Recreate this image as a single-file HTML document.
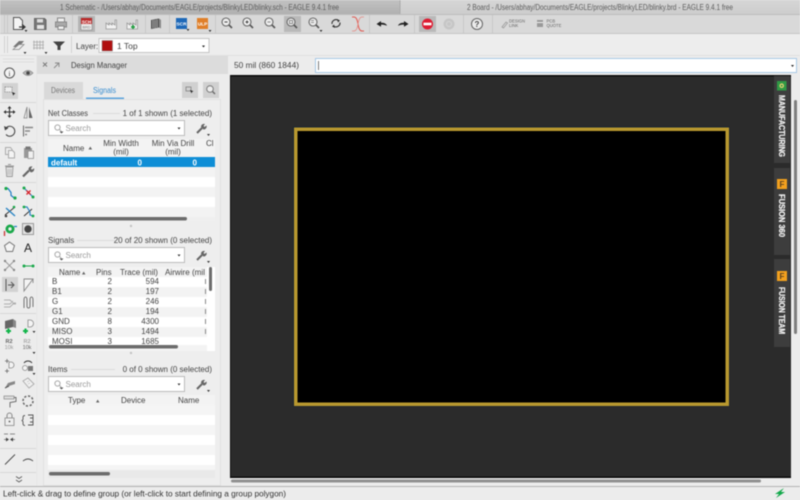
<!DOCTYPE html>
<html><head><meta charset="utf-8"><title>EAGLE</title>
<style>
html,body{margin:0;padding:0;background:#ececec;width:800px;height:500px;overflow:hidden}
svg{position:absolute;left:0;top:0;filter:blur(.4px)}
text{font-family:"Liberation Sans",sans-serif;font-size:8px;fill:#444}
.g{fill:#5c5c5c}
.w{fill:#fff}
.s{fill:#999}
.b{font-weight:bold;fill:#f2f2f2;font-size:8px;stroke:#f2f2f2;stroke-width:.25}
</style></head><body>
<svg width="800" height="500" viewBox="0 0 800 500">
<defs>
<linearGradient id="tl" x1="0" y1="0" x2="0" y2="1"><stop offset="0" stop-color="#c2c2c2"/><stop offset="1" stop-color="#b0b0b0"/></linearGradient>
<linearGradient id="tr" x1="0" y1="0" x2="0" y2="1"><stop offset="0" stop-color="#d6d6d6"/><stop offset="1" stop-color="#cdcdcd"/></linearGradient>
<g id="mag"><circle cx="-1" cy="-1" r="4" fill="#eee" stroke="#666" stroke-width="1.1"/><path d="M2 2L5 5" stroke="#555" stroke-width="1.6"/></g>
<g id="search"><rect x="0" y="0" width="136" height="15" fill="#fff" stroke="#bbb"/><circle cx="9" cy="7" r="2.6" fill="none" stroke="#aaa"/><path d="M11 9l2 2" stroke="#aaa"/><path d="M11 11h4l-2 2z" fill="#555"/><text x="17" y="10.500" class="s">Search</text><path d="M129 7h3l-1.500 2z" fill="#333"/></g>
<g id="wr"><path d="M-4 5L1 0" stroke="#666" stroke-width="2"/><path d="M0 -1a3 3 0 0 1 4 -3l-1.500 2 1 1 2-1.500a3 3 0 0 1-3 4z" fill="#666"/><path d="M6 6h3l-1.500 2z" fill="#333"/></g>
<g id="tri"><path d="M-1.500 1h3L0 3z" fill="#333"/></g>
</defs>

<!-- title bars -->
<rect width="800" height="14" fill="url(#tl)"/>
<rect x="400" width="400" height="14" fill="url(#tr)"/>
<rect x="399.500" y="0" width="1" height="14" fill="#a9a9a9"/>
<text x="60" y="10" textLength="279" lengthAdjust="spacingAndGlyphs" class="g">1 Schematic - /Users/abhay/Documents/EAGLE/projects/BlinkyLED/blinky.sch - EAGLE 9.4.1 free</text>
<text x="467" y="10" textLength="266" lengthAdjust="spacingAndGlyphs" class="g">2 Board - /Users/abhay/Documents/EAGLE/projects/BlinkyLED/blinky.brd - EAGLE 9.4.1 free</text>

<!-- main toolbar -->
<rect y="14" width="800" height="20" fill="#d9d9d9"/>
<rect y="14" width="800" height="1" fill="#bcbcbc"/>
<rect y="33" width="800" height="1" fill="#c6c6c6"/>
<g fill="#c8c8c8">
<rect x="4" y="15" width="1" height="18"/><rect x="7" y="15" width="1" height="18"/>
<rect x="72" y="15" width="1" height="18"/><rect x="145" y="15" width="1" height="18"/>
<rect x="169" y="15" width="1" height="18"/><rect x="215" y="15" width="1" height="18"/>
<rect x="369" y="15" width="1" height="18"/><rect x="414" y="15" width="1" height="18"/>
<rect x="463" y="15" width="1" height="18"/><rect x="492" y="15" width="1" height="18"/>
</g>
<!-- new file -->
<path d="M13.500 17.500h6l3 3v9h-9z" fill="#f4f4f4" stroke="#555"/><path d="M19 27h6M22 24.500l3 2.500-3 2.500" stroke="#333" fill="none" stroke-width="1.200"/><use href="#tri" x="26" y="29"/>
<!-- save -->
<path d="M34.500 18.500h10l1.500 1.500v9.500h-11.500z" fill="#777" stroke="#666"/><rect x="37" y="19" width="6" height="3.500" fill="#ddd"/><rect x="37" y="25" width="7" height="4" fill="#e4e4e4"/>
<!-- print -->
<rect x="57.500" y="18" width="7" height="4" fill="#eee" stroke="#888"/><rect x="55.500" y="22" width="11" height="5" fill="#aaa" stroke="#888"/><rect x="58" y="26" width="6" height="3.500" fill="#f0f0f0" stroke="#888"/>
<!-- SCH button -->
<rect x="78" y="16" width="17" height="16" fill="#b4b4b4"/>
<rect x="81" y="18" width="11" height="12" fill="#eee" stroke="#888" stroke-width=".6"/><rect x="81" y="18" width="11" height="6" fill="#bb2a2a"/>
<text x="86.500" y="23.300" text-anchor="middle" style="font-size:4.500px;font-weight:bold;fill:#fff">SCH</text>
<text x="86.500" y="28.500" text-anchor="middle" style="font-size:3.800px;fill:#777">BRD</text>
<!-- factories -->
<path d="M106 29v-6l3 2v-2l3 2v-2l3 2v-5h1.500v9z" fill="#f2f2f2" stroke="#999" stroke-width=".8"/>
<path d="M127 29v-6l3 2v-2l3 2v-2l3 2v-5h1.500v9z" fill="#f2f2f2" stroke="#999" stroke-width=".8"/><path d="M131 27h4M133 25v4" stroke="#1a9a3a" stroke-width="1.600"/>
<!-- library -->
<path d="M151 20l8-1.500v9l-8 1.500z" fill="#555"/><path d="M159 18.500l2 1.500v8.500l-2 -1z" fill="#888"/><path d="M153 20v8M155 20v8M157 19.500v8" stroke="#ddd" stroke-width=".6"/>
<!-- SCR ULP -->
<rect x="176" y="18" width="11" height="11" fill="#1d68b8"/><text x="181.500" y="25.500" text-anchor="middle" style="font-size:4.800px;font-weight:bold;fill:#fff">SCR</text><use href="#tri" x="188" y="28"/>
<rect x="197" y="18" width="11" height="11" fill="#e07f28"/><text x="202.500" y="25.500" text-anchor="middle" style="font-size:4.800px;font-weight:bold;fill:#fff">ULP</text><use href="#tri" x="210" y="29"/>
<!-- zoom group -->
<use href="#mag" x="227" y="23"/><path d="M224.500 22h3" stroke="#444"/>
<use href="#mag" x="248" y="23"/><path d="M245.500 22h3M247 20.500v3" stroke="#444"/>
<use href="#mag" x="270" y="23"/><path d="M267.500 22h3" stroke="#888"/>
<rect x="284" y="16" width="17" height="16" fill="#b9b9b9"/>
<use href="#mag" x="292" y="23"/><rect x="289.500" y="20.500" width="3" height="3" fill="none" stroke="#666" stroke-width=".7"/>
<use href="#mag" x="314" y="23"/><path d="M311 20.500h3M311 22.500h3" stroke="#777" stroke-width=".7"/><use href="#tri" x="321" y="29"/>
<!-- refresh -->
<path d="M332 24a4 4 0 0 1 6.500 -3.500M340 22.500a4 4 0 0 1-6.500 3.500" fill="none" stroke="#333" stroke-width="1.100"/><path d="M337 19l3 1.500-2 2zM335 28l-3-1.500 2-2z" fill="#333"/>
<!-- ratsnest X -->
<path d="M352 17h2q3 0 4 7t4 7h2" fill="none" stroke="#e05a52" stroke-width="1"/><path d="M352 31h2q3 0 4-7t4-7h2" fill="none" stroke="#e58a84" stroke-width=".8"/>
<!-- arrows -->
<path d="M376.500 24l4.500-3v1.800c3 0 5 .5 6 3-2-1-3.500-1.200-6-1.200v2.200z" fill="#222"/>
<path d="M408.500 24l-4.500-3v1.800c-3 0-5 .5-6 3 2-1 3.500-1.200 6-1.200v2.200z" fill="#222"/>
<!-- stop -->
<rect x="419" y="16" width="17" height="16" fill="#b9b9b9"/>
<circle cx="427.500" cy="24" r="5.500" fill="#dd1d33"/><rect x="423.500" y="22.700" width="8" height="2.600" fill="#fff"/>
<circle cx="449" cy="24" r="5.500" fill="#c6c6c6"/><circle cx="449" cy="24" r="2.500" fill="none" stroke="#d4d4d4"/>
<!-- help -->
<circle cx="477" cy="24" r="5.500" fill="#ececec" stroke="#666" stroke-width="1"/><text x="477" y="27" text-anchor="middle" style="font-size:8px;font-weight:bold;fill:#444">?</text>
<!-- design link -->
<path d="M502 27l4-5 1.500 1-4 5z" fill="none" stroke="#999" stroke-width=".8"/>
<text x="509" y="22.500" style="font-size:4.200px;fill:#666">DESIGN</text><text x="509" y="27" style="font-size:4.200px;fill:#666">LINK</text>
<rect x="537" y="20" width="6" height="7" fill="#999"/><rect x="537" y="22" width="6" height="1" fill="#eee"/>
<text x="546.500" y="22.500" style="font-size:4.200px;fill:#666">PCB</text><text x="546.500" y="27" style="font-size:4.200px;fill:#666">QUOTE</text>

<!-- second toolbar -->
<rect y="34" width="800" height="21" fill="#ededed"/>
<rect y="55" width="800" height="1" fill="#e0e0e0"/>
<rect x="4" y="36" width="1" height="17" fill="#d2d2d2"/><rect x="7" y="36" width="1" height="17" fill="#d2d2d2"/>
<rect x="71" y="36" width="1" height="17" fill="#d2d2d2"/>
<path d="M13 47l6-6h5l-5 6z" fill="#777"/><path d="M13 49.500l6-5h5l-5 5z" fill="#ededed" stroke="#888" stroke-width=".8"/><use href="#tri" x="25" y="51"/>
<path d="M34 40.500v9M37 40.500v9M40 40.500v9M43 40.500v9M33 42h11M33 45h11M33 48h11" stroke="#aaa" stroke-width=".8"/><use href="#tri" x="46" y="51"/>
<path d="M53 41.500h12l-4.500 4.500v4h-3v-4z" fill="#444"/>
<text x="76" y="49">Layer:</text>
<rect x="99" y="38.500" width="110" height="14" fill="#fff" stroke="#c4c4c4"/>
<rect x="102" y="40.500" width="10.500" height="10.500" fill="#b01010" stroke="#888" stroke-width=".5"/>
<text x="117" y="49" style="font-size:8.500px">1 Top</text>
<path d="M202 45.500h3l-1.500 2z" fill="#222"/>

<!-- left strip -->
<rect y="56" width="37" height="430" fill="#ececec"/>
<rect x="36.500" y="56" width="1" height="430" fill="#e2e2e2"/>
<path d="M3 59h31M3 62h31" stroke="#dcdcdc"/>
<circle cx="9.500" cy="73" r="5" fill="#f4f4f4" stroke="#555"/><text x="9.500" y="76" text-anchor="middle" style="font-size:7px;font-family:'Liberation Serif';fill:#333">i</text>
<path d="M23 73q5-5 10 0q-5 5-10 0z" fill="#bbb" stroke="#888" stroke-width=".7"/><circle cx="28" cy="73" r="1.800" fill="#444"/>
<rect x="2" y="83" width="16" height="16" fill="#d2d2d2"/>
<rect x="5" y="87" width="7" height="5" fill="#eee" stroke="#888" stroke-width=".8" stroke-dasharray="1.500 .8"/><path d="M12 92l3.500 1.500-1.500.7-.7 1.500z" fill="#222"/>
<rect x="0" y="102" width="36" height="1" fill="#d8d8d8"/>
<!-- move -->
<path d="M9.500 107v10M4.500 112h10" stroke="#333" stroke-width="1.100"/><path d="M9.500 106l2 2.500h-4zM9.500 118l2-2.500h-4zM3.500 112l2.500 2v-4zM15.500 112l-2.500 2v-4z" fill="#333"/>
<!-- mirror -->
<path d="M24 118l3-11v11z" fill="none" stroke="#888" stroke-width=".8"/><path d="M29 107l3.500 11H29z" fill="#666"/>
<!-- rotate -->
<path d="M6 128a5 5 0 1 1 0 6.500" fill="none" stroke="#444" stroke-width="1"/><path d="M4 126l4.500 2-3.500 2.500z" fill="#444"/>
<!-- align -->
<path d="M23.500 125.500v11" stroke="#666" stroke-width="1"/><path d="M25 127.500h8M25 131h5M25 134.500h2" stroke="#888" stroke-width="1.400"/>
<rect x="0" y="142" width="36" height="1" fill="#d8d8d8"/>
<!-- copy / paste -->
<path d="M5.500 147.500h5l1.500 2v5h-6.500z" fill="#eee" stroke="#aaa"/><path d="M8.500 150.500h4l2 2v5.500h-6z" fill="#f4f4f4" stroke="#aaa"/>
<rect x="24" y="148" width="8" height="10" fill="#999"/><rect x="25.500" y="146.500" width="5" height="3" fill="#777"/><rect x="28" y="151" width="5.500" height="7.500" fill="#f0f0f0" stroke="#888" stroke-width=".7"/>
<!-- trash / wrench -->
<path d="M6 167h7l-.7 9.500H6.700zM5 166h9M8 164.500h3" fill="#e4e4e4" stroke="#999" stroke-width=".9"/><path d="M8 169v6M9.500 169v6M11 169v6" stroke="#aaa" stroke-width=".6"/>
<path d="M23 176.500l6-6" stroke="#666" stroke-width="2.200"/><path d="M28.500 169.500a3 3 0 0 1 4-3l-1.600 2 1 1.200 2.200-1.400a3.200 3.200 0 0 1-3.500 4z" fill="#666"/>
<rect x="0" y="182" width="36" height="1" fill="#d8d8d8"/>
<!-- route -->
<path d="M5 188.500h3l3 4v3l4 3" fill="none" stroke="#1d7dc4" stroke-width="1.200"/><circle cx="6" cy="188.500" r="1.600" fill="#1aa84a"/><circle cx="15" cy="198" r="1.600" fill="#1aa84a"/>
<path d="M24 188l9 9" stroke="#2a85c4" stroke-width="1.200"/><circle cx="24" cy="188" r="1.500" fill="#1aa84a"/><circle cx="33" cy="197" r="1.500" fill="#1aa84a"/><path d="M26.500 190.500l4 4M30.500 190.500l-4 4" stroke="#d8232a" stroke-width="1.300"/>
<!-- row 211 -->
<path d="M5 215l10-8" stroke="#333" stroke-width="1"/><path d="M6 208l9 8" stroke="#2a85c4" stroke-width="1.400"/><circle cx="6" cy="216" r="1.300" fill="#444"/><circle cx="14" cy="207" r="1.300" fill="#1aa84a"/>
<path d="M24 216l8-7" stroke="#333" stroke-width="1"/><path d="M24 207h3l3 5v3l3 1" fill="none" stroke="#2a85c4" stroke-width="1.200"/><circle cx="24" cy="207" r="1.400" fill="#1aa84a"/><circle cx="33" cy="216" r="1.400" fill="#1aa84a"/>
<!-- via / hole -->
<circle cx="10" cy="229" r="4.500" fill="#1aa84a"/><circle cx="10" cy="229" r="1.700" fill="#eee"/><path d="M4.500 236v-5" stroke="#c83232" stroke-width="1.300"/><path d="M14 226.500h3" stroke="#1d7dc4" stroke-width="1.200"/>
<rect x="22.500" y="223.500" width="11" height="11" fill="#e4e4e4" stroke="#999"/><circle cx="28" cy="229" r="3.700" fill="#444"/>
<!-- polygon / A -->
<path d="M9.500 242l5 3.600-1.900 5.900H6.400l-1.900-5.900z" fill="#f4f4f4" stroke="#777"/>
<text x="28" y="252" text-anchor="middle" style="font-size:12px;fill:#222">A</text>
<!-- ratsnest -->
<path d="M5 261l9 9M14 261l-9 9" fill="none" stroke="#999" stroke-width=".9"/><circle cx="5" cy="261" r="1.200" fill="#888"/><circle cx="14" cy="261" r="1.200" fill="#888"/><circle cx="5" cy="270" r="1.200" fill="#888"/><circle cx="14" cy="270" r="1.200" fill="#888"/>
<path d="M24 266h9" stroke="#1aa84a" stroke-width="1"/><circle cx="24" cy="266" r="1.500" fill="#1aa84a"/><circle cx="33" cy="266" r="1.500" fill="#1aa84a"/>
<!-- split/miter -->
<rect x="2" y="277" width="16" height="15" fill="#d2d2d2"/>
<path d="M6 279v12" stroke="#555"/><path d="M8 285h5M11 282l3 3-3 3" fill="none" stroke="#555"/>
<path d="M24 291v-12h9l-9 12zM33 279v4" fill="#f4f4f4" stroke="#888" stroke-width=".9"/>
<!-- row 303 -->
<path d="M4 300h6l3 3h3M4 304h6l3-3M4 307h6l3-3h3" fill="none" stroke="#999" stroke-width=".7"/>
<path d="M24 308v-8q0-3 1.500-3t1.500 3v6q0 2 1.500 2t1.500-2v-6q0-3 1.500-3t1.500 3v7" fill="none" stroke="#555" stroke-width=".8"/>
<rect x="0" y="313" width="36" height="1" fill="#d8d8d8"/>
<!-- add -->
<path d="M5 321l8-2v8l-8 2z" fill="#666"/><path d="M13 319l3 2v7l-3-1z" fill="#888"/><path d="M6 331h5M8.500 328.500v5" stroke="#12b54a" stroke-width="2"/>
<path d="M30 320a3.500 3.500 0 0 1 0 7h-2v-7z" fill="#f4f4f4" stroke="#888" stroke-width=".8"/><path d="M23 331h5M25.500 328.500v5" stroke="#12b54a" stroke-width="2"/><use href="#tri" x="34" y="330"/>
<!-- R2 -->
<text x="9" y="343" text-anchor="middle" style="font-size:5.500px;font-weight:bold;fill:#666">R2</text><text x="9" y="349" text-anchor="middle" style="font-size:5.500px;fill:#999">10k</text>
<text x="27" y="343" text-anchor="middle" style="font-size:5.500px;font-weight:bold;fill:#aaa">R2</text><text x="27" y="349" text-anchor="middle" style="font-size:5.500px;fill:#666">10k</text><use href="#tri" x="34" y="351"/>
<!-- row 366 -->
<path d="M5 361h4M7 359v4M5 371h4M7 369v4" stroke="#666" stroke-width=".8"/><path d="M11 362a3 3 0 0 1 0 6h-2v-6z" fill="#f4f4f4" stroke="#888" stroke-width=".8"/>
<circle cx="25" cy="368" r="2.500" fill="#f4f4f4" stroke="#888" stroke-width=".7"/><path d="M24 363a5 5 0 0 1 8 0" fill="none" stroke="#333"/><rect x="28" y="366" width="5" height="5" fill="#777"/><use href="#tri" x="34" y="372"/>
<!-- row 383 -->
<path d="M5 388l3-5 7-2v3l-6 2z" fill="#888"/><path d="M5 388l4-2" stroke="#555"/>
<path d="M23 381l5-3 6 6-5 4z" fill="#f0f0f0" stroke="#aaa" stroke-width=".9"/><path d="M27 382l2-1M28 384l2-1" stroke="#bbb" stroke-width=".6"/>
<!-- row 401 -->
<rect x="4" y="396" width="10" height="3" fill="#ddd" stroke="#888" stroke-width=".7"/><path d="M14 397.500h2v4l-6 1v5" fill="none" stroke="#666" stroke-width=".9"/>
<circle cx="28" cy="401" r="5" fill="none" stroke="#666" stroke-width="1.500" stroke-dasharray="2.200 1.700"/>
<!-- lock -->
<rect x="5" y="418" width="9" height="7.500" fill="#eee" stroke="#888" stroke-width=".8"/><path d="M7 418v-2.500a2.500 2.500 0 0 1 5 0V418" fill="none" stroke="#888"/><circle cx="9.500" cy="421.500" r=".9" fill="#555"/>
<path d="M25 415.500q-2 0-2 2v2l-1 1 1 1v2q0 2 2 2M28 415h5v10h-5M30 418h3M30 422h3" fill="none" stroke="#555" stroke-width=".9"/>
<!-- row 438 -->
<path d="M4 434h4M10 434h5" stroke="#888"/><path d="M4 439.500h4M11 439.500h4" stroke="#888"/><path d="M6 437.500l3 2-3 2zM13 437.500l-3 2 3 2z" fill="#444"/>
<rect x="0" y="448" width="36" height="1" fill="#d8d8d8"/>
<!-- line arc -->
<path d="M5 464.500l10-10" stroke="#444" stroke-width=".9"/>
<path d="M23 461q5-4 10 0" fill="none" stroke="#444" stroke-width=".9"/>
<rect x="0" y="472" width="36" height="1" fill="#d8d8d8"/>
<path d="M16 476.500l3 2 3-2M16 480l3 2 3-2" fill="none" stroke="#555" stroke-width=".8"/>

<!-- design manager -->
<rect x="37" y="56" width="193" height="430" fill="#ececec"/>
<rect x="37" y="56" width="191" height="18" fill="#dcdcdc"/>
<path d="M43 62.500l4 4M47 62.500l-4 4" stroke="#777" stroke-width=".9"/><path d="M54 68l4.500-4.500M55 63h4v4" fill="none" stroke="#888" stroke-width=".9"/>
<text x="71" y="68" textLength="56" lengthAdjust="spacingAndGlyphs">Design Manager</text>
<!-- panel frame -->
<rect x="43.500" y="99.500" width="177" height="386" fill="#eeeeee" stroke="#e0e0e0"/>
<rect x="44" y="82" width="39" height="17" fill="#d9d9d9"/>
<text x="51" y="93" textLength="24" lengthAdjust="spacingAndGlyphs" style="fill:#777">Devices</text>
<text x="93" y="93" textLength="23" lengthAdjust="spacingAndGlyphs" style="fill:#3a8ed0">Signals</text>
<rect x="86" y="97.500" width="38" height="1.500" fill="#5aa3dc"/>
<rect x="182" y="82" width="16" height="16" fill="#d0d0d0"/>
<rect x="186" y="87" width="5" height="4" fill="none" stroke="#777" stroke-width=".7"/><path d="M190 90l3.500 1.300-1.400.6-.6 1.500z" fill="#222"/>
<rect x="203" y="82" width="16" height="16" fill="#d0d0d0"/>
<circle cx="210" cy="89" r="3.300" fill="#eee" stroke="#777"/><path d="M212.500 91.500l2.500 2.500" stroke="#666" stroke-width="1.300"/>

<!-- Net classes -->
<text x="48" y="116" textLength="40" lengthAdjust="spacingAndGlyphs">Net Classes</text>
<rect x="93" y="113" width="27" height="1" fill="#dcdcdc"/>
<text x="212" y="116" text-anchor="end">1 of 1 shown (1 selected)</text>
<use href="#search" x="48.500" y="120.500"/>
<use href="#wr" x="201" y="128"/>
<rect x="48" y="139" width="167" height="18" fill="#f3f3f3"/>
<text x="63" y="151">Name</text><path d="M88.500 149.500l1.800-3 1.800 3z" fill="#666"/>
<text x="121" y="146" text-anchor="middle">Min Width</text><text x="121" y="154.500" text-anchor="middle">(mil)</text>
<text x="173" y="146" text-anchor="middle">Min Via Drill</text><text x="173" y="154.500" text-anchor="middle">(mil)</text>
<text x="206" y="146">Cl</text>
<rect x="48" y="157" width="167" height="10" fill="#0f8ed6"/>
<text x="51" y="165.500" class="w" style="font-weight:bold;font-size:8px">default</text>
<text x="142" y="165.500" text-anchor="end" class="w" style="font-weight:bold">0</text>
<text x="197" y="165.500" text-anchor="end" class="w" style="font-weight:bold">0</text>
<rect x="48" y="167" width="167" height="10" fill="#f3f3f3"/>
<rect x="48" y="177" width="167" height="10" fill="#fff"/>
<rect x="48" y="187" width="167" height="10" fill="#f3f3f3"/>
<rect x="48" y="197" width="167" height="10" fill="#fff"/>
<rect x="48" y="207" width="167" height="10" fill="#f3f3f3"/>
<rect x="48" y="217" width="167" height="4" fill="#efefef"/>
<rect x="49" y="217" width="138" height="3.500" rx="1.700" fill="#6c6c6c"/>
<circle cx="131" cy="226" r="1.200" fill="#c4c4c4"/>

<!-- Signals -->
<text x="48" y="243">Signals</text>
<rect x="77" y="240" width="38" height="1" fill="#dcdcdc"/>
<text x="212" y="243" text-anchor="end">20 of 20 shown (0 selected)</text>
<use href="#search" x="48.500" y="247.500"/>
<use href="#wr" x="201" y="255"/>
<rect x="48" y="267" width="167" height="10" fill="#f3f3f3"/>
<rect x="48" y="277" width="159" height="10" fill="#fff"/>
<rect x="48" y="287" width="159" height="10" fill="#f3f3f3"/>
<rect x="48" y="297" width="159" height="10" fill="#fff"/>
<rect x="48" y="307" width="159" height="10" fill="#f3f3f3"/>
<rect x="48" y="317" width="159" height="10" fill="#fff"/>
<rect x="48" y="327" width="159" height="10" fill="#f3f3f3"/>
<rect x="48" y="337" width="159" height="8" fill="#fff"/>
<rect x="207" y="267" width="8" height="84" fill="#fff"/>
<text x="59" y="275">Name</text><path d="M82 274.500l1.700-3 1.700 3z" fill="#666"/>
<text x="96" y="275">Pins</text><text x="120" y="275">Trace (mil)</text><text x="165" y="275" textLength="40" lengthAdjust="spacingAndGlyphs">Airwire (mil</text>
<g>
<text x="52" y="284">B</text><text x="112" y="284" text-anchor="end">2</text><text x="159" y="284" text-anchor="end">594</text><rect x="205" y="279" width="1" height="5" fill="#888"/>
<text x="52" y="294">B1</text><text x="112" y="294" text-anchor="end">2</text><text x="159" y="294" text-anchor="end">197</text><rect x="205" y="289" width="1" height="5" fill="#888"/>
<text x="52" y="304">G</text><text x="112" y="304" text-anchor="end">2</text><text x="159" y="304" text-anchor="end">246</text><rect x="205" y="299" width="1" height="5" fill="#888"/>
<text x="52" y="314">G1</text><text x="112" y="314" text-anchor="end">2</text><text x="159" y="314" text-anchor="end">194</text><rect x="205" y="309" width="1" height="5" fill="#888"/>
<text x="52" y="324">GND</text><text x="112" y="324" text-anchor="end">8</text><text x="159" y="324" text-anchor="end">4300</text><rect x="205" y="319" width="1" height="5" fill="#888"/>
<text x="52" y="334">MISO</text><text x="112" y="334" text-anchor="end">3</text><text x="159" y="334" text-anchor="end">1494</text><rect x="205" y="329" width="1" height="5" fill="#888"/>
<text x="52" y="344">MOSI</text><text x="112" y="344" text-anchor="end">3</text><text x="159" y="344" text-anchor="end">1685</text>
</g>
<rect x="48" y="345" width="159" height="6" fill="#f3f3f3"/>
<rect x="209" y="267" width="3" height="24" rx="1.500" fill="#6c6c6c"/>
<rect x="49" y="345" width="129" height="3.500" rx="1.700" fill="#6c6c6c"/>
<circle cx="131" cy="353" r="1.200" fill="#c4c4c4"/>

<!-- Items -->
<text x="48" y="372">Items</text>
<rect x="71" y="369" width="44" height="1" fill="#dcdcdc"/>
<text x="212" y="372" text-anchor="end">0 of 0 shown (0 selected)</text>
<use href="#search" x="48.500" y="376.500"/>
<use href="#wr" x="201" y="384"/>
<rect x="48" y="395" width="167" height="10" fill="#f3f3f3"/>
<text x="68" y="403">Type</text><path d="M96 402.500l1.700-3 1.700 3z" fill="#666"/><text x="121" y="403">Device</text><text x="178" y="403">Name</text>
<rect x="48" y="405" width="167" height="10" fill="#f5f5f5"/>
<rect x="48" y="415" width="167" height="10" fill="#fff"/>
<rect x="48" y="425" width="167" height="10" fill="#f5f5f5"/>
<rect x="48" y="435" width="167" height="10" fill="#fff"/>
<rect x="48" y="445" width="167" height="10" fill="#f5f5f5"/>
<rect x="48" y="455" width="167" height="10" fill="#fff"/>
<rect x="48" y="465" width="167" height="5" fill="#f5f5f5"/>
<rect x="48" y="470" width="167" height="8" fill="#e9e9e9"/>
<rect x="49" y="472" width="61" height="3.500" rx="1.700" fill="#6c6c6c"/>

<!-- command row -->
<rect x="228" y="56" width="572" height="19" fill="#ececec"/>
<text x="234" y="68" textLength="65" lengthAdjust="spacingAndGlyphs">50 mil (860 1844)</text>
<rect x="315.500" y="58.500" width="481" height="14" fill="#fff" stroke="#a9c9e6"/>
<rect x="318" y="61" width="1" height="9" fill="#777"/>
<path d="M791 65h3l-1.500 2z" fill="#222"/>

<!-- canvas -->
<rect x="230" y="75" width="561" height="403" fill="#2b2b2b"/>
<rect x="230" y="75" width="561" height="1.500" fill="#0a0a0a"/>
<rect x="230" y="75" width="1" height="403" fill="#111"/>
<rect x="230" y="476.500" width="561" height="1.500" fill="#0a0a0a"/>
<!-- board -->
<rect x="293" y="126.500" width="436.500" height="280" fill="#1a2530"/>
<rect x="294" y="127.500" width="435" height="278.500" fill="#b8982f"/>
<rect x="297.500" y="131" width="428" height="271.500" fill="#000"/>
<!-- right strip -->
<rect x="791" y="75" width="9" height="411" fill="#ececec"/>
<rect x="794" y="100" width="3" height="234" rx="1.500" fill="#7d7d7d"/>
<rect x="774" y="76" width="16" height="87" fill="#3d3d3d"/>
<rect x="774" y="168" width="16" height="87" fill="#3d3d3d"/>
<rect x="774" y="259" width="16" height="88" fill="#3d3d3d"/>
<rect x="777" y="81" width="9.500" height="9.500" fill="#2f9a45"/><circle cx="781.700" cy="85.700" r="2.300" fill="#e0d070"/><circle cx="781.700" cy="85.700" r="1" fill="#2f9a45"/>
<rect x="777" y="179" width="10" height="10" fill="#f2a01e"/><text x="782" y="187" text-anchor="middle" style="font-size:8px;font-weight:bold;fill:#5a4020">F</text>
<rect x="777" y="271" width="10" height="10" fill="#f2a01e"/><text x="782" y="279" text-anchor="middle" style="font-size:8px;font-weight:bold;fill:#5a4020">F</text>
<text transform="translate(779,95) rotate(90)" class="b" textLength="62" lengthAdjust="spacingAndGlyphs">MANUFACTURING</text>
<text transform="translate(779,194) rotate(90)" class="b" textLength="43" lengthAdjust="spacingAndGlyphs">FUSION 360</text>
<text transform="translate(779,287) rotate(90)" class="b" textLength="47" lengthAdjust="spacingAndGlyphs">FUSION TEAM</text>
<!-- h scrollbar -->
<rect x="230" y="478" width="570" height="8" fill="#ececec"/>
<rect x="231" y="479.500" width="530" height="3" rx="1.500" fill="#909090"/>

<!-- status bar -->
<rect y="486" width="800" height="14" fill="#ececec"/>
<rect y="486" width="800" height="1" fill="#b4b4b4"/>
<text x="3" y="496.500" textLength="283" lengthAdjust="spacingAndGlyphs" style="fill:#333">Left-click &amp; drag to define group (or left-click to start defining a group polygon)</text>
<path d="M784 488l-9 6h4l-3 4 9-6h-4z" fill="#12a84a"/>
</svg>
</body></html>
